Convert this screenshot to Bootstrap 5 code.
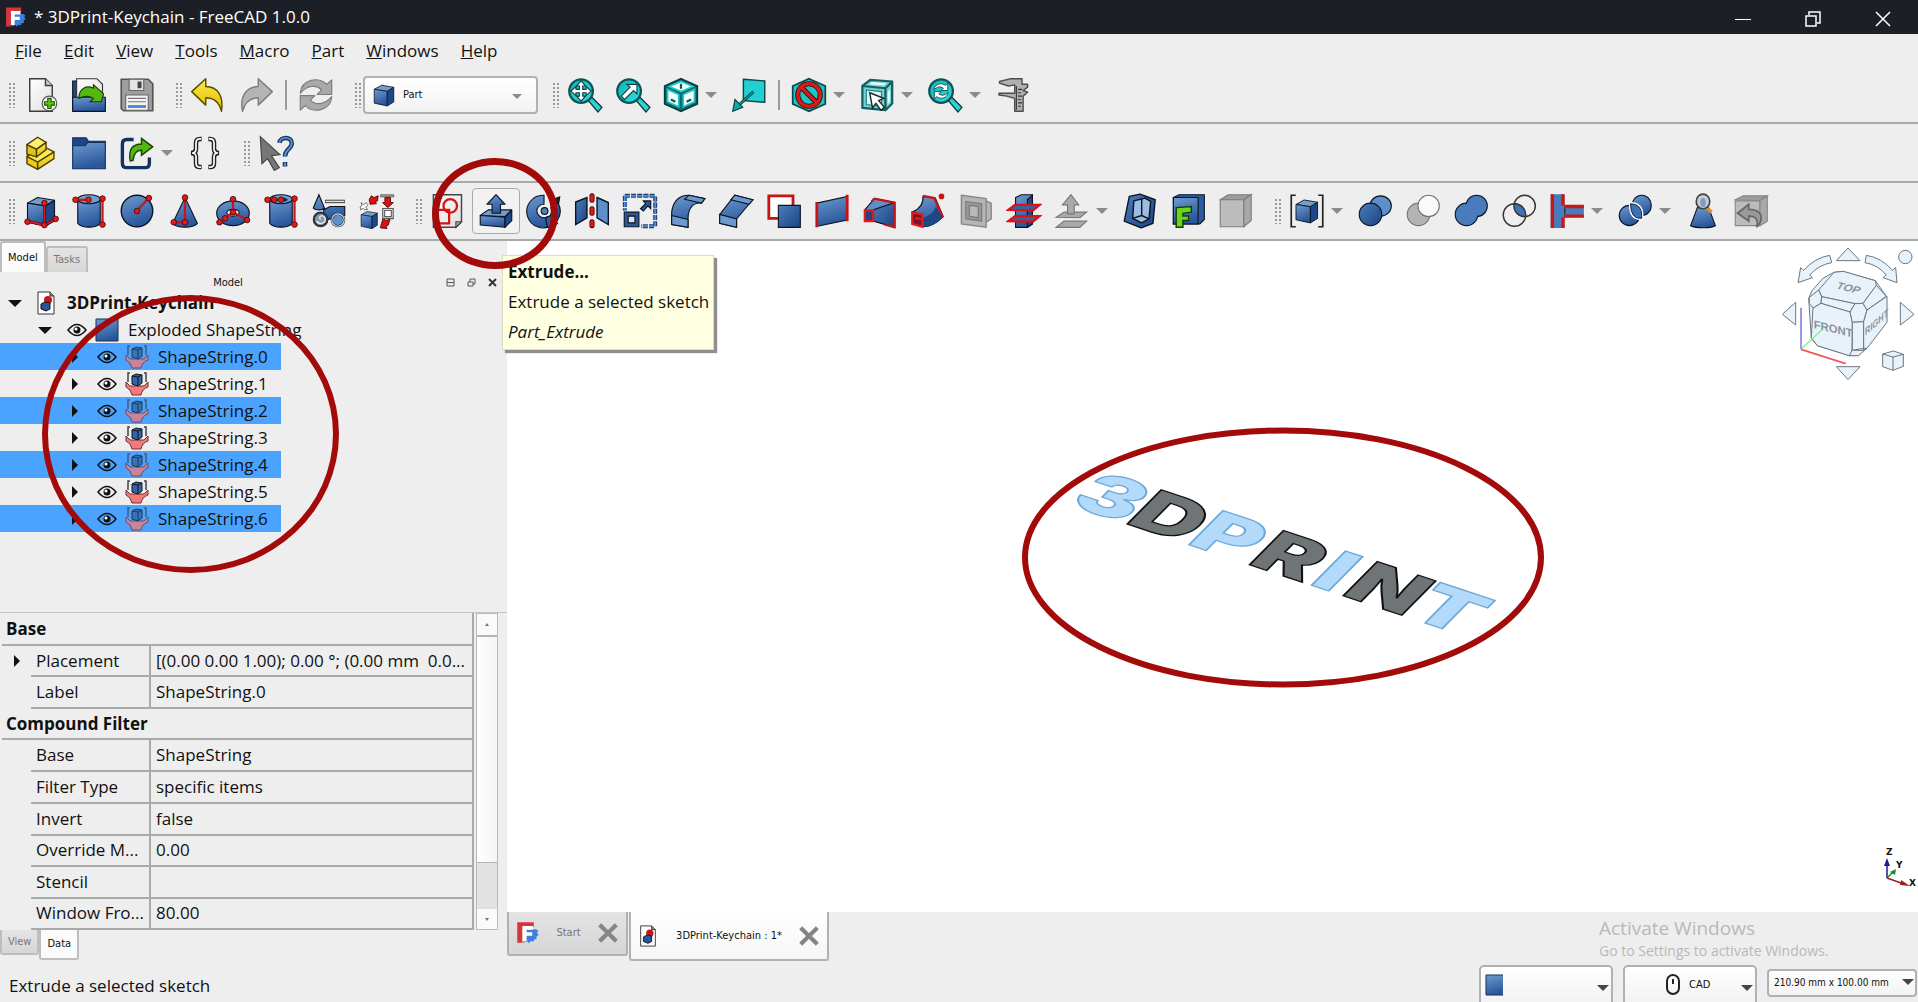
<!DOCTYPE html>
<html lang="en">
<head>
<meta charset="utf-8">
<meta name="viewport" content="width=device-width, initial-scale=1">
<title>* 3DPrint-Keychain - FreeCAD 1.0.0</title>
<link href="https://cdn.jsdelivr.net/npm/bootstrap@5.3.0/dist/css/bootstrap.min.css" rel="stylesheet">
<script src="https://cdn.jsdelivr.net/npm/bootstrap@5.3.0/dist/js/bootstrap.bundle.min.js" defer></script>
<style>
:root{--face:#eeeeee;--line:#a9abab;--mark:#a30a0a;--sel:#4aa3ff}
body{font-family:"Open Sans","Noto Sans",sans-serif;font-size:17px;line-height:24px;color:#111;background:var(--face);height:100vh;overflow:hidden}
.tiny{font-family:"DejaVu Sans Condensed","DejaVu Sans",sans-serif;font-size:11px;line-height:16px}
.titlebar{background:#1c1f25;color:#fff;height:34px;font-size:17px}
.titlebar button{width:70px;height:34px;color:#fff;border:0;border-radius:0}
.menus{height:34px}
.menus a{color:#111;text-decoration:none;padding:0 11px}
.tools{height:59px;border-bottom:2px solid var(--line)}
.tools-top{height:56px}
.tools-low{height:58px}
.tool{width:48px;height:46px;padding:0;border:1px solid transparent;border-radius:4px;display:flex;align-items:center;justify-content:center;position:relative;flex:none}
.tool svg{width:36px;height:36px}
.tool.hot{border-color:#a9a9a9;background:#f2f2f2}
.drop{width:20px;height:46px;padding:0;border:0;flex:none}
.drop::before,.caret{content:"";display:block;width:0;border:6px solid transparent;border-top-color:#8b8b8b;border-bottom:0}
.grip{width:8px;height:26px;margin:0 1px 0 14px;flex:none;background-image:radial-gradient(circle,#9a9a9a 1px,transparent 1px);background-size:4px 4px}
.grip:first-child{margin-left:8px}
.rule{width:2px;height:30px;background:#9a9a9a;margin:0 5px;flex:none}
.bench{width:175px;height:38px}
.combo{position:relative;border:2px solid #b1b1b1;border-radius:4px;background:linear-gradient(#fff,#f2f2f2);display:flex;align-items:center}
.combo select{appearance:none;background:transparent;border:0;width:100%;height:100%;outline:0;color:#111}
.combo .caret{position:absolute;right:2px;top:50%;border-top-color:#444}
.combo.bench select{padding-left:38px}
.bench svg{position:absolute;left:6px;width:26px;height:26px;pointer-events:none}
.combo.bench .caret{right:14px;top:16px;border-width:5px;border-bottom:0;border-top-color:#8b8b8b}
.ring{position:absolute;border:6px solid var(--mark);border-radius:50%;pointer-events:none;z-index:30}
.tool .ring-tool{left:-41px;top:-31px;width:126px;height:111px;border-width:7px}
.tree .ring-tree{left:42px;top:6px;width:297px;height:278px}
.side{width:507px;flex:none}
.tabbtn{border:2px solid #bdbdbd;padding:0 6px;background:linear-gradient(#e4e4e4,#d6d6d6);color:#777}
.tabbtn.on{background:#fbfbfb;color:#111}
.tabtop{border-bottom:0;border-radius:3px 3px 0 0}
.tabbot{border-top:0;border-radius:0 0 3px 3px}
.dock{height:13px}
.dock svg{width:9px;height:9px}
.dock button{width:21px;padding:0;border:0;line-height:0}
.tree{list-style:none;margin:0;padding:0;position:relative}
.tree li{height:27px;display:flex;align-items:center;white-space:nowrap}
.tree li.lv1{padding-left:8px}
.tree li.lv2{padding-left:38px}
.tree li.lv3{padding-left:68px;width:281px}
.tree li.picked{background:var(--sel)}
.picked .ti{opacity:.75}
.tree .tw{width:14px;height:14px;flex:none}
.tree .eye{width:20px;height:16px;margin:0 8px 0 15px;flex:none}
.tree .ti{width:24px;height:24px;margin-right:9px;flex:none}
.lv1 .tw{margin-right:12px}
.props{border-top:1px solid #c4c4c4;height:318px;overflow:hidden;flex:none}
.ptable{width:472px;margin-left:2px;table-layout:fixed;border-collapse:collapse;border-right:2px solid var(--line)}
.ptable tr{height:32px}
.ptable tr:nth-child(even){height:31px}
.ptable th,.ptable td{padding:0 5px;overflow:hidden;text-overflow:ellipsis;white-space:pre;border-bottom:2px solid var(--line);line-height:20px}
.ptable td:first-child{border-bottom:0;text-align:center}
.ptable td:first-child svg{display:block;margin:auto}
.ptable td+td+td{border-left:2px solid var(--line)}
.ptable th{padding-left:4px}
.sbar{width:22px;background:#e2e2e2;border:1px solid #bbb;margin-left:2px;height:317px}
.sbar button{height:21px;padding:0;border:0;border-radius:0;background:#fafafa;line-height:0;flex:none}
.sbar .thumb{height:228px;background:linear-gradient(90deg,#fff,#f4f4f4);border-top:2px solid #b5b5b5;border-bottom:1px solid #b5b5b5}
.view3d{background:#fff;position:relative;min-height:0}
.scene{display:block;width:100%;height:100%}
.navcube{position:absolute;right:0;top:0;width:148px;height:144px}
.tip{position:absolute;left:-5px;top:14px;width:212px;height:95px;padding:1px 5px;background:#ffffe1;border:1px solid #dcdcc0;box-shadow:3px 3px 1px #8f8f8f;line-height:30px;white-space:nowrap;z-index:5}
.mditabs{height:53px}
.mdi{height:44px;width:121px;border-color:#b1b1b1}
.mdi.on{height:49px;width:200px;margin-left:1px;background:linear-gradient(#fff,#f6f6f6)}
.mdi svg{width:24px;height:26px}
.mdi .closer{width:20px;height:20px}
.mdi .page{width:22px;height:24px}
.wmark{width:319px;color:#b9b9b9;padding-top:4px}
.wmark h2{font-size:19px;line-height:25px;margin:0;font-weight:400}
.wmark p{font-size:14px;line-height:20px;margin:0}
.status{height:37px;padding-left:9px}
.status .combo{height:40px;width:134px;margin-right:10px;border-radius:5px 5px 0 0}
.status .combo.size{height:28px;width:150px;margin:4px 1px 0 0;border-radius:4px;font-size:10px}
.status .size .caret{right:1px;top:8px}
.status .size select{padding:0 0 0 5px}
.status .nav{padding-left:64px}
</style>
</head>
<body class="d-flex flex-column">

<svg width="0" height="0" class="position-absolute" aria-hidden="true">
<defs>
<linearGradient id="gb" x1="0" y1="0" x2=".3" y2="1"><stop offset="0" stop-color="#6d9bd0"/><stop offset="1" stop-color="#2a569b"/></linearGradient>
<linearGradient id="gd" x1="0" y1="0" x2="1" y2="1"><stop offset="0" stop-color="#4c7dbd"/><stop offset="1" stop-color="#1b437f"/></linearGradient>
<linearGradient id="gy" x1="0" y1="0" x2="0" y2="1"><stop offset="0" stop-color="#fce94f"/><stop offset="1" stop-color="#e0bd00"/></linearGradient>
<linearGradient id="gt" x1="0" y1="0" x2="1" y2="1"><stop offset="0" stop-color="#0bb2b4"/><stop offset="1" stop-color="#34e0e2"/></linearGradient>
<linearGradient id="gp" x1="0" y1="0" x2="1" y2="1"><stop offset="0" stop-color="#fff"/><stop offset="1" stop-color="#dedede"/></linearGradient>
<g id="cube" stroke="#0b1521" stroke-width="2" stroke-linejoin="round"><path d="M8 18 26 8l30 5-16 10z" fill="#729fcf"/><path d="M8 18l32 5v36L8 52z" fill="url(#gb)"/><path d="M40 23l16-10v36L40 59z" fill="#1d4787"/></g>
<symbol id="logo" viewBox="0 0 64 64"><path d="M6 3h44v13H20v42H6z" fill="#d8343c"/><path d="M22 58V22h34l6 4-3 5 4 6-6 4 1 7-7 1-2 6-7-2-5 6-4-5z" fill="#3c7fdc"/><path d="M20 13h28v10H31v7h15v9H31v15H20z" fill="#fff"/></symbol>
<symbol id="i-new" viewBox="0 0 64 64"><path d="M12 3h28l12 12v46H12z" fill="url(#gp)" stroke="#3a3a3a" stroke-width="2.5"/><path d="M40 3v12h12" fill="#ccc" stroke="#3a3a3a" stroke-width="2.5"/><circle cx="47" cy="47" r="13" fill="#fff" stroke="#555" stroke-width="2"/><path d="M44 38h6v6h6v6h-6v6h-6v-6h-6v-6h6z" fill="#5cc614" stroke="#1f5c05" stroke-width="2"/></symbol>
<symbol id="i-open" viewBox="0 0 64 64"><path d="M3 7h12v50H3z" fill="#204a87" stroke="#0b1521" stroke-width="2"/><path d="M10 3h36l10 10v26H10z" fill="url(#gp)" stroke="#333" stroke-width="2"/><path d="M3 36h58v25H3z" fill="url(#gb)" stroke="#0b1521" stroke-width="2"/><path d="M14 38c0-18 14-24 26-18v-6l18 16-4 14H34l6-6c-10-6-18-4-26 0z" fill="#55b80f" stroke="#173f04" stroke-width="2"/></symbol>
<symbol id="i-save" viewBox="0 0 64 64"><path d="M4 4h48l8 8v48H8l-4-4z" fill="#9d9f9c" stroke="#555" stroke-width="3"/><path d="M18 4h26v20H18z" fill="#e4e4e4" stroke="#666" stroke-width="2"/><path d="M33 8h7v12h-7z" fill="#444"/><path d="M12 32h40v27H12z" fill="#f3f3f3" stroke="#666" stroke-width="2"/><path d="M16 38h32M16 44h32" stroke="#777" stroke-width="2"/><path d="M16 50h32v5H16z" fill="#4a86cf"/></symbol>
<symbol id="i-undo" viewBox="0 0 64 64"><path d="M3 26 28 3v14c22 0 32 18 28 44-4-16-12-24-28-24v13z" fill="url(#gy)" stroke="#5a4a00" stroke-width="2.5" stroke-linejoin="round"/></symbol>
<symbol id="i-redo" viewBox="0 0 64 64"><path d="M61 26 36 3v14C14 17 3 35 8 61c4-16 12-24 28-24v13z" fill="#b4b4b4" stroke="#7c7c7c" stroke-width="2.5" stroke-linejoin="round"/></symbol>
<symbol id="i-refresh" viewBox="0 0 64 64"><g fill="#a9a9a9" stroke="#7b7b7b" stroke-width="2" stroke-linejoin="round"><path id="rf" d="M4 29C6 4 38-2 51 13l9-8v26H34l8-8C32 13 16 15 4 29z"/><use href="#rf" transform="rotate(180 32 32)"/></g></symbol>
<symbol id="i-cube" viewBox="0 0 64 64"><use href="#cube"/></symbol>
<symbol id="i-fit" viewBox="0 0 64 64"><path d="M38 42l6-6 18 18-7 8z" fill="#2bd5d7" stroke="#0c4041" stroke-width="2.5"/><circle cx="25" cy="25" r="21" fill="url(#gt)" stroke="#0d5354" stroke-width="4"/><path d="M25 7l8 9h-5v6h6v-5l9 8-9 8v-5h-6v6h5l-8 9-8-9h5v-6h-6v5l-9-8 9-8v5h6v-6h-5z" fill="#fff" stroke="#103c3d" stroke-width="2"/></symbol>
<symbol id="i-fitsel" viewBox="0 0 64 64"><path d="M38 42l6-6 18 18-7 8z" fill="#2bd5d7" stroke="#0c4041" stroke-width="2.5"/><circle cx="25" cy="25" r="21" fill="url(#gt)" stroke="#0d5354" stroke-width="4"/><path d="M11 34l16-16-6-5h18v17l-6-6-16 16z" fill="#fff" stroke="#103c3d" stroke-width="2"/></symbol>
<symbol id="i-axo" viewBox="0 0 64 64"><path d="M32 3l29 13v32L32 61 3 48V16z" fill="#0d6b6d" stroke="#083c3d" stroke-width="3"/><path d="M32 8l21 9-21 9-21-9zM8 22l20 9v22L8 44zM56 22l-20 9v22l20-9z" fill="#f1ffff" stroke="#25c7c9" stroke-width="3"/><path d="M32 12v9M14 40l8 4M42 44l8-4" stroke="#0d5657" stroke-width="4"/></symbol>
<symbol id="i-ortho" viewBox="0 0 64 64"><path d="M22 4l38 3v38l-38-3z" fill="#22cfd1" stroke="#0c4546" stroke-width="2.5"/><path d="M40 26 14 50" stroke="#0c4546" stroke-width="5"/><path d="M40 26 14 50" stroke="#26d5d7" stroke-width="1.5"/><path d="M3 61l4-21 14 14z" fill="#14a5a7" stroke="#0c4546" stroke-width="2"/></symbol>
<symbol id="i-noent" viewBox="0 0 64 64"><path d="M32 3l29 13v32L32 61 3 48V16z" fill="#1bc4c6" stroke="#0c4546" stroke-width="3"/><circle cx="32" cy="32" r="20" fill="none" stroke="#3d0a0a" stroke-width="9"/><path d="M18 18l28 28" stroke="#3d0a0a" stroke-width="9"/><circle cx="32" cy="32" r="20" fill="none" stroke="#d71a1a" stroke-width="6"/><path d="M18 18l28 28" stroke="#d71a1a" stroke-width="6"/></symbol>
<symbol id="i-boxsel" viewBox="0 0 64 64"><path d="M6 16 20 5l39 3-12 12zM6 16l41 4v39L6 55zM47 20 59 8v39L47 59z" fill="#7ad0d1" stroke="#0f6061" stroke-width="4" stroke-linejoin="round"/><path d="M13 23l27 3v26l-27-3z" fill="#dff4f4" stroke="#1b8384" stroke-width="2"/><path d="M51 27l4-6v22l-4 6zM23 9l26 2-5 4-27-2z" fill="#e8f8f8"/><path d="M19 28l25 10-9 4 10 12-6 5-9-12-6 8z" fill="#fff" stroke="#1a2a2a" stroke-width="2.5"/></symbol>
<symbol id="i-link" viewBox="0 0 64 64"><path d="M38 42l6-6 18 18-7 8z" fill="#2bd5d7" stroke="#0c4041" stroke-width="2.5"/><circle cx="25" cy="25" r="21" fill="url(#gt)" stroke="#0d5354" stroke-width="4"/><g fill="#fff" stroke="#103c3d" stroke-width="1.5"><path id="lk" d="M12 23c2-12 15-13 21-8l4-4v13H25l4-4c-5-4-11-3-17 3z"/><use href="#lk" transform="rotate(180 25 25)"/></g></symbol>
<symbol id="i-caliper" viewBox="0 0 64 64"><path d="M8 8 28 3h20v10l10 0v5l-8 6 8 3-8 7v27H35V38l-14-4-14-2v-3h28V14L24 16 8 11z" fill="#b0b0b0" stroke="#4d4d4d" stroke-width="2.5" stroke-linejoin="round"/><path d="M38 16v42M41 22h7M41 28h5M41 34h7M41 40h5M41 46h7M41 52h5" stroke="#333" stroke-width="2"/></symbol>
<symbol id="i-bricks" viewBox="0 0 64 64"><g stroke="#4c3f00" stroke-width="2.5" stroke-linejoin="round"><path d="M7 38l19 10v13L7 51z" fill="#e9cc1c"/><path d="M26 48l29-18v12L26 61z" fill="url(#gy)"/><path d="M7 38l29-18 19 10-29 18z" fill="#fbe858"/><path d="M7 17l17 8v14L7 34z" fill="#e2c416"/><path d="M24 25 41 13v13L24 39z" fill="url(#gy)"/><path d="M7 17 26 4l15 9-17 12z" fill="#fdee72"/></g></symbol>
<symbol id="i-folder" viewBox="0 0 64 64"><path d="M3 5h24l4 6h30v14H3z" fill="#1d468a" stroke="#14315f" stroke-width="2"/><path d="M3 19h22l5-6h31v47H3z" fill="url(#gb)" stroke="#14315f" stroke-width="2"/></symbol>
<symbol id="i-export" viewBox="0 0 64 64"><path d="M26 8H14Q6 8 6 16v34q0 8 8 8h32q8 0 8-8V40" fill="none" stroke="#14315f" stroke-width="6"/><path d="M20 46c-4-20 4-30 20-30V6l20 15-20 15v-9c-10 0-14 6-15 18z" fill="#55b80f" stroke="#173f04" stroke-width="2.5"/></symbol>
<symbol id="i-braces" viewBox="0 0 64 64"><g fill="none" stroke="#222" stroke-width="8"><path d="M26 7h-3q-7 0-7 7v11q0 7-9 7 9 0 9 7v11q0 7 7 7h3M38 7h3q7 0 7 7v11q0 7 9 7-9 0-9 7v11q0 7-7 7h-3"/></g><g fill="none" stroke="#fff" stroke-width="3"><path d="M25 7h-2q-7 0-7 7v11q0 7-7 7 7 0 7 7v11q0 7 7 7h2M39 7h2q7 0 7 7v11q0 7 7 7-7 0-7 7v11q0 7-7 7h-2"/></g></symbol>
<symbol id="i-whats" viewBox="0 0 64 64"><path d="M4 3l35 32-15 2 14 21-9 5-12-21-10 9z" fill="#777" stroke="#444" stroke-width="2"/><path d="M38 14c2-12 22-12 22 1 0 10-12 10-12 23M48 48v8" stroke="#153463" stroke-width="8" fill="none"/><path d="M38 14c2-12 22-12 22 1 0 10-12 10-12 23M48 49v6" stroke="#5c8fd0" stroke-width="3.500" fill="none"/></symbol>
<symbol id="i-box" viewBox="0 0 64 64"><use href="#cube"/><path d="M38 20v37L8 50M38 57l20-10" stroke="#460808" stroke-width="5" fill="none"/><path d="M38 20v37L8 50M38 57l20-10" stroke="#e01b1b" stroke-width="3" fill="none"/><g fill="#e01b1b" stroke="#460808" stroke-width="1.500"><circle cx="38" cy="18" r="5"/><circle cx="38" cy="57" r="5"/><circle cx="8" cy="51" r="5"/><circle cx="58" cy="46" r="5"/></g></symbol>
<symbol id="i-cyl" viewBox="0 0 64 64"><path d="M12 12v42c8 9 32 9 40 0V12z" fill="url(#gb)" stroke="#0b1521" stroke-width="2"/><ellipse cx="32" cy="11" rx="20" ry="8" fill="#729fcf" stroke="#0b1521" stroke-width="2"/><path d="M8 12h24M56 12v42" stroke="#c81515" stroke-width="4"/><g fill="#e01b1b" stroke="#460808" stroke-width="1.500"><circle cx="8" cy="12" r="5"/><circle cx="31" cy="12" r="5"/><circle cx="56" cy="10" r="5"/><circle cx="56" cy="56" r="5"/></g></symbol>
<symbol id="i-sphere" viewBox="0 0 64 64"><circle cx="32" cy="32" r="28" fill="url(#gb)" stroke="#0b1521" stroke-width="2.500"/><path d="M32 31 53 9" stroke="#c81515" stroke-width="4"/><g fill="#e01b1b" stroke="#460808" stroke-width="1.500"><circle cx="32" cy="32" r="5"/><circle cx="53" cy="9" r="5"/></g></symbol>
<symbol id="i-cone" viewBox="0 0 64 64"><path d="M32 8 10 54c8 9 36 9 44 0z" fill="url(#gb)" stroke="#0b1521" stroke-width="2"/><path d="M32 8v44H12" stroke="#c81515" stroke-width="4" fill="none"/><g fill="#e01b1b" stroke="#460808" stroke-width="1.500"><circle cx="32" cy="8" r="5"/><circle cx="32" cy="52" r="5"/><circle cx="12" cy="52" r="5"/></g></symbol>
<symbol id="i-torus" viewBox="0 0 64 64"><ellipse cx="32" cy="36" rx="29" ry="22" fill="url(#gb)" stroke="#0b1521" stroke-width="2"/><ellipse cx="32" cy="35" rx="11" ry="6" fill="#eee" stroke="#0b1521" stroke-width="2"/><path d="M32 10v24L12 50M32 34l25 14" stroke="#c81515" stroke-width="4" fill="none"/><g fill="#e01b1b" stroke="#460808" stroke-width="1.500"><circle cx="32" cy="11" r="5"/><circle cx="32" cy="34" r="5"/><circle cx="18" cy="45" r="5"/><circle cx="8" cy="52" r="5"/><circle cx="57" cy="48" r="5"/></g></symbol>
<symbol id="i-tube" viewBox="0 0 64 64"><path d="M12 12v42c8 9 32 9 40 0V12z" fill="url(#gb)" stroke="#0b1521" stroke-width="2"/><ellipse cx="32" cy="11" rx="20" ry="8" fill="#729fcf" stroke="#0b1521" stroke-width="2"/><ellipse cx="34" cy="12" rx="10" ry="4" fill="#15335f"/><path d="M8 12h24M56 12v42" stroke="#c81515" stroke-width="4"/><g fill="#e01b1b" stroke="#460808" stroke-width="1.500"><circle cx="8" cy="12" r="5"/><circle cx="20" cy="12" r="5"/><circle cx="32" cy="12" r="5"/><circle cx="56" cy="10" r="5"/><circle cx="56" cy="56" r="5"/></g></symbol>
<symbol id="i-prims" viewBox="0 0 64 64"><path d="M14 3 4 27c4 4 16 4 20 0zM22 30l12-6h26v16l-34 8z" fill="url(#gb)" stroke="#0b1521" stroke-width="2"/><path d="M25 15h35" stroke="#222" stroke-width="6"/><path d="M26 15h33" stroke="#e5e5e5" stroke-width="3"/><g fill="#8c99a8" stroke="#2c3540" stroke-width="4"><circle cx="17" cy="47" r="12"/><circle cx="48" cy="48" r="11" fill="#5d8fcb"/></g><circle cx="48" cy="48" r="11" fill="none" stroke="#d5d9dc" stroke-width="2"/><path d="M17 47c-6-6 5-10 8-2s-10 13-15 5" stroke="#fff" stroke-width="2" fill="none"/></symbol>
<symbol id="i-build" viewBox="0 0 64 64"><use href="#cube" transform="translate(-1 28) scale(.6)"/><g fill="#d11" stroke="#400" stroke-width="1.500"><path d="M18 12l4-7 5 3 7-3-1 9-4 1 2 4-11 1zM46 8h10v9h5l-10 9-9-9h4zM40 54l3-9 4 4 8-2-3 10-4 2 2 4-12-1z"/></g><path d="M38 3h24v4H38z" fill="#999" stroke="#444"/><path d="M4 17l4 4 5-4 3 4-4 4 3 4-5 1-3-3-4 3-1-5 3-3z" fill="#fff" stroke="#555" stroke-width="1.500"/><path d="M44 29h15v15H44z" fill="#fff" stroke="#333" stroke-width="5"/><path d="M44 29h15v15H44z" fill="none" stroke="#ddd" stroke-width="2"/></symbol>
<symbol id="i-sketch" viewBox="0 0 64 64"><path d="M6 3h50v48L46 61H6z" fill="url(#gp)" stroke="#444" stroke-width="2.500"/><path d="M56 51H46v10z" fill="#aaa" stroke="#444" stroke-width="2"/><circle cx="36" cy="23" r="12" fill="none" stroke="#d11" stroke-width="4"/><path d="M6 30h28v24H6" fill="none" stroke="#d11" stroke-width="4"/></symbol>
<symbol id="i-extrude" viewBox="0 0 64 64"><g stroke="#0b1521" stroke-width="2" stroke-linejoin="round"><path d="M4 40 18 30h42L48 42z" fill="#729fcf"/><path d="M4 40l44 3v18L4 57z" fill="url(#gb)"/><path d="M48 43l12-12v18L48 61z" fill="#1d4787"/><path d="M32 3 48 20h-8v16H25V20h-9z" fill="url(#gb)"/></g></symbol>
<symbol id="i-revolve" viewBox="0 0 64 64"><g stroke="#0b1521" stroke-width="2"><path d="M32 4v16a12 12 0 1 0 6 22l10 14A29 29 0 1 1 32 4z" fill="url(#gb)"/><path d="M44 26l13-8q9 16-2 32l-12-9q4-8 1-15z" fill="url(#gd)"/><path d="M44 40 56 54q-8 8-18 7l-3-17z" fill="#2d5ba0"/><circle cx="33" cy="32" r="6" fill="#4c7dbd"/><path d="M46 12l14-5-2 12z" fill="#222"/></g></symbol>
<symbol id="i-mirror" viewBox="0 0 64 64"><path d="M3 16l20-8v36L3 56z" fill="url(#gd)" stroke="#0b1521" stroke-width="2.500"/><path d="M41 8l20 9v39L41 44z" fill="#5d8fcb" stroke="#0b1521" stroke-width="2.500"/><path d="M32 5v8M32 28v8M32 51v7" stroke="#400" stroke-width="9" stroke-linecap="round"/><path d="M32 5v8M32 28v8M32 51v7" stroke="#e01b1b" stroke-width="6" stroke-linecap="round"/></symbol>
<symbol id="i-scale" viewBox="0 0 64 64"><path d="M5 5h54v54H34M5 5v26" fill="none" stroke="#1b3f7c" stroke-width="7" stroke-dasharray="9 2"/><path d="M5 5h54v54H34M5 5v26" fill="none" stroke="#5a8ccc" stroke-width="3" stroke-dasharray="9 2"/><path d="M4 34h26v26H4z" fill="#2c579b" stroke="#0b1521" stroke-width="2"/><path d="M11 41h12v12H11z" fill="#dce7f5" stroke="#0b1521" stroke-width="2"/><path d="M33 28l9-9-4-5h13v14l-5-5-8 9z" fill="#2c579b" stroke="#0b1521" stroke-width="2"/></symbol>
<symbol id="i-fillet" viewBox="0 0 64 64"><g stroke="#0b1521" stroke-width="2"><path d="M3 56V34C5 14 18 3 34 4l28 6-6 8C42 16 32 26 32 46v15z" fill="url(#gb)"/><path d="M34 4l28 6-6 8-30-7zM3 40l29 7v14L3 56z" fill="#6c9ad0"/></g></symbol>
<symbol id="i-chamfer" viewBox="0 0 64 64"><g stroke="#0b1521" stroke-width="2"><path d="M3 54V38L30 4l32 8-7 8-22 26v15z" fill="url(#gb)"/><path d="M30 4l32 8-7 8-32-8zM3 38l30 8v15L3 54z" fill="#6c9ad0"/></g></symbol>
<symbol id="i-face" viewBox="0 0 64 64"><path d="M5 5h43v40H5z" fill="#fff" stroke="#c11" stroke-width="5"/><path d="M22 22h39v39H22z" fill="url(#gd)" stroke="#0b1521" stroke-width="2"/></symbol>
<symbol id="i-ruled" viewBox="0 0 64 64"><path d="M5 18 59 6v42L5 59z" fill="url(#gb)" stroke="#0b1521" stroke-width="2"/><path d="M5 16v45M59 3v47" stroke="#c11" stroke-width="5"/></symbol>
<symbol id="i-loft" viewBox="0 0 64 64"><path d="M5 30 22 10l36 7v44L22 50z" fill="#5d8fcb" stroke="#0b1521" stroke-width="2"/><path d="M20 30 58 17v44L20 50z" fill="url(#gd)" stroke="#0b1521" stroke-width="2"/><path d="M22 10l36 7v44L40 56M22 10l-5 5" fill="none" stroke="#c11" stroke-width="4"/><path d="M5 31h15v19H5z" fill="#26437f" stroke="#e01b1b" stroke-width="4"/></symbol>
<symbol id="i-sweep" viewBox="0 0 64 64"><path d="M4 34C18 28 24 18 23 6l22 3 14 33c-12 12-24 18-36 18z" fill="url(#gb)" stroke="#0b1521" stroke-width="2"/><path d="M22 44c10-2 20-8 24-20l13 18c-12 12-24 18-36 18z" fill="#1d4787"/><path d="M23 5l20 4 15 33" fill="none" stroke="#c11" stroke-width="4"/><path d="M4 35l18 3v22L4 55zM9 45l12 1" fill="#7c1222" stroke="#e01b1b" stroke-width="4"/><circle cx="56" cy="6" r="5" fill="#c11"/></symbol>
<symbol id="i-section" viewBox="0 0 64 64"><path d="M50 14l9 4v28l-9 6zM6 4l44 6v51L6 55z" fill="#b5b5b5" stroke="#888" stroke-width="2.500"/><path d="M14 15l28 4v31l-28-4z" fill="#999" stroke="#777" stroke-width="2"/><path d="M20 22l16 2v20l-16-3z" fill="#b9b9b9" stroke="#777" stroke-width="2"/></symbol>
<symbol id="i-cross" viewBox="0 0 64 64"><path d="M17 8 27 3h20v52l-9 6H17z" fill="url(#gb)" stroke="#0b1521" stroke-width="2"/><path d="M38 12l9-8v51l-9 6z" fill="#1d4787" stroke="#0b1521" stroke-width="2"/><g fill="#3c5fa0" stroke="#d11" stroke-width="4"><path d="M4 30l12-9h44l-12 10zM4 50l12-9h44L48 51z"/></g></symbol>
<symbol id="i-offset" viewBox="0 0 64 64"><g fill="#a9a9a9" stroke="#777" stroke-width="2"><path d="M4 43l14-9h40L46 44zM4 61l14-11h40L46 61z"/><path d="M30 3l14 18h-8v16H24V21h-9z"/></g></symbol>
<symbol id="i-thick" viewBox="0 0 64 64"><g stroke="#0b1521" stroke-width="2.500" stroke-linejoin="round"><path d="M13 6 32 2l27 10-4 42-21 8L4 50z" fill="url(#gd)"/><path d="M21 14l20-5 10 6-3 31-13 7-16-8z" fill="#9cbde2"/><path d="M35 10v30l-16 5M35 40l13 6" fill="none"/></g></symbol>
<symbol id="i-proj" viewBox="0 0 64 64"><g stroke="#0b1521" stroke-width="2"><path d="M6 8l10-5h45v44l-8 8H6z" fill="#2d5ba0"/><path d="M6 8h44v47H6z" fill="url(#gb)"/></g><path d="M11 26l27-2v10l-15 2v5h10v8H23v12H11z" fill="#6cd41b" stroke="#143d03" stroke-width="2.500"/></symbol>
<symbol id="i-graycube" viewBox="0 0 64 64"><g stroke="#7d7d7d" stroke-width="2"><path d="M4 12 18 3h41L46 12z" fill="#9d9d9d"/><path d="M4 12h42v48H4z" fill="#bcbcbc"/><path d="M46 12 59 3v46L46 60z" fill="#a8a8a8"/></g></symbol>
<symbol id="i-compound" viewBox="0 0 64 64"><path d="M12 4H4v56h8M52 4h8v56h-8" fill="none" stroke="#222" stroke-width="3"/><use href="#cube" transform="translate(6 6) scale(.8)"/></symbol>
<symbol id="i-bool" viewBox="0 0 64 64"><g stroke="#0b1521" stroke-width="2"><ellipse cx="42" cy="23" rx="19" ry="18" fill="#5d8fcb"/><ellipse cx="24" cy="38" rx="20" ry="20" fill="url(#gd)"/></g></symbol>
<symbol id="i-cut" viewBox="0 0 64 64"><g stroke="#777" stroke-width="2"><ellipse cx="24" cy="38" rx="20" ry="20" fill="#b3b3b3"/><ellipse cx="42" cy="23" rx="19" ry="19" fill="#fafafa"/></g></symbol>
<symbol id="i-union" viewBox="0 0 64 64"><g stroke="#0b1521" stroke-width="4"><ellipse cx="42" cy="23" rx="18" ry="18"/><ellipse cx="24" cy="38" rx="19" ry="19"/></g><g fill="#4a7cbd"><ellipse cx="42" cy="23" rx="18" ry="18"/><ellipse cx="24" cy="38" rx="19" ry="19"/></g></symbol>
<symbol id="i-common" viewBox="0 0 64 64"><path d="M24 18A19 19 0 0 1 43 42 19 19 0 0 1 24 18z" fill="#3f72b8"/><g fill="none" stroke="#333" stroke-width="2.500"><ellipse cx="42" cy="23" rx="19" ry="19"/><ellipse cx="24" cy="39" rx="20" ry="20"/></g></symbol>
<symbol id="i-join" viewBox="0 0 64 64"><path d="M3 2h24v20h35v21H27v19H3z" fill="#4a7cbd"/><path d="M6 2v60M25 2v20M25 43v19M27 24h35M27 41h35" stroke="#c91818" stroke-width="6"/><path d="M28 27v11" stroke="#222" stroke-width="2"/></symbol>
<symbol id="i-split" viewBox="0 0 64 64"><g stroke="#0b1521" stroke-width="2" fill="url(#gb)"><ellipse cx="44" cy="22" rx="17" ry="18"/><ellipse cx="22" cy="40" rx="18" ry="18"/></g><path d="M24 19q22 0 20 26-20 2-20-26z" fill="#3e70b4" stroke="#fff" stroke-width="6"/><path d="M24 19q22 0 20 26-20 2-20-26z" fill="#3e70b4" stroke="#0b1521" stroke-width="1.500"/></symbol>
<symbol id="i-check" viewBox="0 0 64 64"><path d="M22 26h20l12 32c-10 5-34 5-44 0z" fill="url(#gb)" stroke="#0b1521" stroke-width="2"/><path d="M38 26l9 8" stroke="#e08a1e" stroke-width="6"/><ellipse cx="32" cy="15" rx="12" ry="13" fill="#c7ced4" stroke="#444" stroke-width="3"/><ellipse cx="32" cy="17" rx="5" ry="8" fill="#7d9cc4"/></symbol>
<symbol id="i-defeat" viewBox="0 0 64 64"><g stroke="#888" stroke-width="2"><path d="M4 12 18 5h43L46 14z" fill="#9d9d9d"/><path d="M4 14h44v44H4z" fill="#bcbcbc"/><path d="M48 14 61 6v44L48 58z" fill="#a8a8a8"/></g><path d="M8 36l20-16v9c24 0 28 16 14 32 4-14-2-20-14-20v9z" fill="#999" stroke="#666" stroke-width="3"/></symbol>
<symbol id="t-doc" viewBox="0 0 24 24"><path d="M4 1h12l4 4v18H4z" fill="#fff" stroke="#333"/><path d="M16 1v4h4" fill="#888" stroke="#333"/><circle cx="14" cy="9" r="4" fill="#c81515"/><path d="M7 13l4-2 5 1v6l-4 2-5-2z" fill="#29569b" stroke="#0b1521"/></symbol>
<symbol id="t-eye" viewBox="0 0 20 16"><path d="M1 8q9-11 18 0-9 11-18 0z" fill="none" stroke="#111" stroke-width="1.500"/><circle cx="10" cy="8" r="3.500" fill="#111"/><circle cx="9" cy="7" r="1.500" fill="#fff"/></symbol>
<symbol id="t-shape" viewBox="0 0 24 24"><path d="M5 1H3v9M19 1h2v9" fill="none" stroke="#444" stroke-width="1.500"/><path d="M1 10v5q5 2 6 8h9q1-6 7-8v-5l-4 4H5z" fill="#f47a7a" stroke="#6e3030"/><path d="M7 4l4-2 6 1v8l-4 3-6-2z" fill="#3465a4" stroke="#0b1521"/><path d="M7 4l6 1 4-2M13 5v8" stroke="#0b1521" fill="none"/></symbol>
<symbol id="t-right" viewBox="0 0 14 14"><path d="M4 1l6 6-6 6z" fill="#111"/></symbol>
<symbol id="t-down" viewBox="0 0 14 14"><path d="M0 4h14L7 11z" fill="#111"/></symbol>
<symbol id="t-x" viewBox="0 0 24 24"><path d="M2 2l20 20M22 2 2 22" stroke="#858585" stroke-width="5"/></symbol>
</defs>
</svg>

<header class="titlebar d-flex align-items-center flex-shrink-0">
  <svg class="ms-1 me-2" width="22" height="25"><use href="#logo"/></svg>
  <span class="me-auto">* 3DPrint-Keychain - FreeCAD 1.0.0</span>
  <button class="btn p-0" aria-label="Minimize"><svg width="16" height="16"><path d="M0 8.500h16" stroke="#fff"/></svg></button>
  <button class="btn p-0" aria-label="Restore"><svg width="16" height="16" fill="none" stroke="#fff" stroke-width="1.500"><path d="M1 5h10v10H1zM4 4V1h11v11h-3"/></svg></button>
  <button class="btn p-0" aria-label="Close"><svg width="16" height="16"><path d="M1 1l14 14M15 1 1 15" stroke="#fff" stroke-width="1.500"/></svg></button>
</header>

<nav class="menus d-flex align-items-center ps-1 flex-shrink-0">
  <a href="#"><u>F</u>ile</a><a href="#"><u>E</u>dit</a><a href="#"><u>V</u>iew</a><a href="#"><u>T</u>ools</a><a href="#"><u>M</u>acro</a><a href="#"><u>P</u>art</a><a href="#"><u>W</u>indows</a><a href="#"><u>H</u>elp</a>
</nav>

<div class="tools tools-top d-flex align-items-center flex-shrink-0" role="toolbar" aria-label="File and view">
  <span class="grip"></span>
  <button class="btn tool" aria-label="New"><svg><use href="#i-new"/></svg></button>
  <button class="btn tool" aria-label="Open"><svg><use href="#i-open"/></svg></button>
  <button class="btn tool" aria-label="Save"><svg><use href="#i-save"/></svg></button>
  <span class="grip"></span>
  <button class="btn tool" aria-label="Undo"><svg><use href="#i-undo"/></svg></button>
  <button class="btn tool" aria-label="Redo"><svg><use href="#i-redo"/></svg></button>
  <span class="rule"></span>
  <button class="btn tool" aria-label="Refresh"><svg><use href="#i-refresh"/></svg></button>
  <span class="grip"></span>
  <div class="combo bench tiny"><svg><use href="#i-cube"/></svg><select aria-label="Workbench"><option>Part</option></select><span class="caret"></span></div>
  <span class="grip"></span>
  <button class="btn tool" aria-label="Fit all"><svg><use href="#i-fit"/></svg></button>
  <button class="btn tool" aria-label="Fit selection"><svg><use href="#i-fitsel"/></svg></button>
  <button class="btn tool" aria-label="Axonometric"><svg><use href="#i-axo"/></svg></button><button class="btn drop" aria-label="More views"></button>
  <button class="btn tool" aria-label="Align to selection"><svg><use href="#i-ortho"/></svg></button>
  <span class="rule"></span>
  <button class="btn tool" aria-label="Draw style"><svg><use href="#i-noent"/></svg></button><button class="btn drop" aria-label="More styles"></button>
  <button class="btn tool" aria-label="Box selection"><svg><use href="#i-boxsel"/></svg></button><button class="btn drop" aria-label="More selections"></button>
  <button class="btn tool" aria-label="Sync view"><svg><use href="#i-link"/></svg></button><button class="btn drop" aria-label="More sync"></button>
  <button class="btn tool" aria-label="Measure"><svg><use href="#i-caliper"/></svg></button>
</div>

<div class="tools d-flex align-items-center flex-shrink-0" role="toolbar" aria-label="Structure">
  <span class="grip"></span>
  <button class="btn tool" aria-label="Create part"><svg><use href="#i-bricks"/></svg></button>
  <button class="btn tool" aria-label="Create group"><svg><use href="#i-folder"/></svg></button>
  <button class="btn tool" aria-label="Make link"><svg><use href="#i-export"/></svg></button><button class="btn drop" aria-label="More links"></button>
  <button class="btn tool" aria-label="Variable set"><svg><use href="#i-braces"/></svg></button>
  <span class="grip"></span>
  <button class="btn tool" aria-label="What's this?"><svg><use href="#i-whats"/></svg></button>
</div>

<div class="tools tools-low d-flex align-items-center flex-shrink-0" role="toolbar" aria-label="Part">
  <span class="grip"></span>
  <button class="btn tool" aria-label="Box"><svg><use href="#i-box"/></svg></button>
  <button class="btn tool" aria-label="Cylinder"><svg><use href="#i-cyl"/></svg></button>
  <button class="btn tool" aria-label="Sphere"><svg><use href="#i-sphere"/></svg></button>
  <button class="btn tool" aria-label="Cone"><svg><use href="#i-cone"/></svg></button>
  <button class="btn tool" aria-label="Torus"><svg><use href="#i-torus"/></svg></button>
  <button class="btn tool" aria-label="Tube"><svg><use href="#i-tube"/></svg></button>
  <button class="btn tool" aria-label="Primitives"><svg><use href="#i-prims"/></svg></button>
  <button class="btn tool" aria-label="Shape builder"><svg><use href="#i-build"/></svg></button>
  <span class="grip"></span>
  <button class="btn tool" aria-label="Sketch"><svg><use href="#i-sketch"/></svg></button>
  <button class="btn tool hot" aria-label="Extrude"><svg><use href="#i-extrude"/></svg><span class="ring ring-tool"></span></button>
  <button class="btn tool" aria-label="Revolve"><svg><use href="#i-revolve"/></svg></button>
  <button class="btn tool" aria-label="Mirror"><svg><use href="#i-mirror"/></svg></button>
  <button class="btn tool" aria-label="Scale"><svg><use href="#i-scale"/></svg></button>
  <button class="btn tool" aria-label="Fillet"><svg><use href="#i-fillet"/></svg></button>
  <button class="btn tool" aria-label="Chamfer"><svg><use href="#i-chamfer"/></svg></button>
  <button class="btn tool" aria-label="Make face"><svg><use href="#i-face"/></svg></button>
  <button class="btn tool" aria-label="Ruled surface"><svg><use href="#i-ruled"/></svg></button>
  <button class="btn tool" aria-label="Loft"><svg><use href="#i-loft"/></svg></button>
  <button class="btn tool" aria-label="Sweep"><svg><use href="#i-sweep"/></svg></button>
  <button class="btn tool" aria-label="Section"><svg><use href="#i-section"/></svg></button>
  <button class="btn tool" aria-label="Cross-sections"><svg><use href="#i-cross"/></svg></button>
  <button class="btn tool" aria-label="Offset"><svg><use href="#i-offset"/></svg></button><button class="btn drop" aria-label="More offsets"></button>
  <button class="btn tool" aria-label="Thickness"><svg><use href="#i-thick"/></svg></button>
  <button class="btn tool" aria-label="Projection"><svg><use href="#i-proj"/></svg></button>
  <button class="btn tool" aria-label="Color per face"><svg><use href="#i-graycube"/></svg></button>
  <span class="grip"></span>
  <button class="btn tool" aria-label="Compound"><svg><use href="#i-compound"/></svg></button><button class="btn drop" aria-label="More compounds"></button>
  <button class="btn tool" aria-label="Boolean"><svg><use href="#i-bool"/></svg></button>
  <button class="btn tool" aria-label="Cut"><svg><use href="#i-cut"/></svg></button>
  <button class="btn tool" aria-label="Union"><svg><use href="#i-union"/></svg></button>
  <button class="btn tool" aria-label="Intersection"><svg><use href="#i-common"/></svg></button>
  <button class="btn tool" aria-label="Connect"><svg><use href="#i-join"/></svg></button><button class="btn drop" aria-label="More joins"></button>
  <button class="btn tool" aria-label="Split"><svg><use href="#i-split"/></svg></button><button class="btn drop" aria-label="More splits"></button>
  <button class="btn tool" aria-label="Check geometry"><svg><use href="#i-check"/></svg></button>
  <button class="btn tool" aria-label="Defeaturing"><svg><use href="#i-defeat"/></svg></button>
</div>

<main class="d-flex flex-grow-1" style="min-height:0">
  <aside class="side d-flex flex-column">
    <div class="d-flex align-items-end tiny" role="tablist" style="height:31px">
      <button class="tabbtn tabtop on h-100" role="tab">Model</button>
      <button class="tabbtn tabtop" role="tab" style="height:26px">Tasks</button>
    </div>
    <div class="dock tiny d-flex align-items-center mt-1 pe-1 ps-3">
      <span class="flex-grow-1 text-center">Model</span>
      <button class="btn" aria-label="Shade"><svg viewBox="0 0 9 9" fill="none" stroke="#555"><path d="M1 1h7v7H1zM1 4.500h7"/></svg></button>
      <button class="btn" aria-label="Float"><svg viewBox="0 0 9 9" fill="none" stroke="#555"><path d="M1 4h5v4H1zM3 4V1h5v5H6"/></svg></button>
      <button class="btn" aria-label="Close panel"><svg viewBox="0 0 9 9" stroke="#333" stroke-width="2"><path d="M1 1l7 7M8 1 1 8"/></svg></button>
    </div>
    <ul class="tree">
      <li class="lv1 fw-bold"><svg class="tw"><use href="#t-down"/></svg><svg class="ti"><use href="#t-doc"/></svg>3DPrint-Keychain</li>
      <li class="lv2"><svg class="tw"><use href="#t-down"/></svg><svg class="eye"><use href="#t-eye"/></svg><svg class="ti" viewBox="0 0 24 24"><path d="M1 1h22v22H1z" fill="url(#gb)" stroke="#14315f"/></svg>Exploded ShapeString</li>
      <li class="lv3 picked"><svg class="tw"><use href="#t-right"/></svg><svg class="eye"><use href="#t-eye"/></svg><svg class="ti"><use href="#t-shape"/></svg>ShapeString.0</li>
      <li class="lv3"><svg class="tw"><use href="#t-right"/></svg><svg class="eye"><use href="#t-eye"/></svg><svg class="ti"><use href="#t-shape"/></svg>ShapeString.1</li>
      <li class="lv3 picked"><svg class="tw"><use href="#t-right"/></svg><svg class="eye"><use href="#t-eye"/></svg><svg class="ti"><use href="#t-shape"/></svg>ShapeString.2</li>
      <li class="lv3"><svg class="tw"><use href="#t-right"/></svg><svg class="eye"><use href="#t-eye"/></svg><svg class="ti"><use href="#t-shape"/></svg>ShapeString.3</li>
      <li class="lv3 picked"><svg class="tw"><use href="#t-right"/></svg><svg class="eye"><use href="#t-eye"/></svg><svg class="ti"><use href="#t-shape"/></svg>ShapeString.4</li>
      <li class="lv3"><svg class="tw"><use href="#t-right"/></svg><svg class="eye"><use href="#t-eye"/></svg><svg class="ti"><use href="#t-shape"/></svg>ShapeString.5</li>
      <li class="lv3 picked"><svg class="tw"><use href="#t-right"/></svg><svg class="eye"><use href="#t-eye"/></svg><svg class="ti"><use href="#t-shape"/></svg>ShapeString.6</li>
      <li class="ring ring-tree" aria-hidden="true"></li>
    </ul>
    <div class="props d-flex mt-auto">
      <table class="ptable">
        <colgroup><col style="width:29px"><col style="width:119px"><col></colgroup>
        <tbody>
        <tr><th colspan="3">Base</th></tr>
        <tr><td class="p-0"><svg width="14" height="14"><use href="#t-right"/></svg></td><td>Placement</td><td>[(0.00 0.00 1.00); 0.00 °; (0.00 mm  0.0...</td></tr>
        <tr><td></td><td>Label</td><td>ShapeString.0</td></tr>
        <tr><th colspan="3">Compound Filter</th></tr>
        <tr><td></td><td>Base</td><td>ShapeString</td></tr>
        <tr><td></td><td>Filter Type</td><td>specific items</td></tr>
        <tr><td></td><td>Invert</td><td>false</td></tr>
        <tr><td></td><td>Override M...</td><td>0.00</td></tr>
        <tr><td></td><td>Stencil</td><td></td></tr>
        <tr><td></td><td>Window Fro...</td><td>80.00</td></tr>
        </tbody>
      </table>
      <div class="sbar d-flex flex-column">
        <button class="btn" aria-label="Scroll up"><svg width="4" height="3"><path d="M0 3l2-3 2 3z" fill="#777"/></svg></button>
        <div class="thumb"></div>
        <button class="btn mt-auto border-top" aria-label="Scroll down"><svg width="4" height="3"><path d="M0 0l2 3 2-3z" fill="#777"/></svg></button>
      </div>
    </div>
    <div class="d-flex align-items-start tiny flex-shrink-0" role="tablist" style="height:35px">
      <button class="tabbtn tabbot" role="tab" style="height:25px">View</button>
      <button class="tabbtn tabbot on" role="tab" style="height:30px">Data</button>
    </div>
  </aside>

  <section class="d-flex flex-column flex-grow-1" style="min-width:0">
    <div class="view3d flex-grow-1">
      <svg class="scene" viewBox="0 0 1411 671" preserveAspectRatio="xMidYMid meet">
        <g transform="matrix(1.44 .478 -.78 .787 620.5 283.3)" font-family="Inter" font-weight="900" font-size="60" stroke-width="1.300">
          <g fill="#b3dafa" stroke="#6fa9d8"><text x="-42">3</text><text x="40">P</text><text x="125">I</text><text x="192">T</text></g>
          <g fill="#6f7476" stroke="#111"><text x="-3">D</text><text x="82">R</text><text x="147">N</text></g>
        </g>
        <ellipse cx="776" cy="316.500" rx="258" ry="127" fill="none" stroke="#a30a0a" stroke-width="6"/>
        <g stroke-width="1.500"><path d="M1380 637v-15" stroke="#1b1b9a"/><path d="M1377 625l3-8 3 8z" fill="#1b1b9a"/><path d="M1380 637l6-6" stroke="#1c8a2c"/><path d="M1383 631l6-3-1 6z" fill="#1c8a2c"/><path d="M1380 637l14 5" stroke="#9b2020"/><path d="M1394 639l9 6-10-1z" fill="#9b2020"/></g>
        <g font-family="DejaVu Sans" font-weight="700" font-size="9" fill="#111"><text x="1379" y="614">Z</text><text x="1389" y="627">Y</text><text x="1402" y="645">X</text></g>
      </svg>
      <svg class="navcube" viewBox="0 18 444 432" fill="#e8f2fb" stroke="#6d7780" stroke-width="3" stroke-linejoin="round" aria-label="Navigation cube">
        <path d="M199 77 234 39l36 38zM199 395h71l-36 39zM77 202v68l-40-32zM391 202v68l41-32z"/>
        <path d="M84 143l8-45 9 8q34-38 78-45l6 22q-38 6-66 37l8 8zM381 143l-4-45-10 8q-32-38-78-45l-4 22q38 6 64 37l-10 8z"/>
        <circle cx="406" cy="66" r="20"/>
        <path d="M218 109 316 137 349 184V262L265 362H238L142 332 124 310 116 190 126 167 160 129 192 112z"/>
        <g><path d="M192 112l28-3 96 28 3 14-40 54-24 1L155 185l-9-20z"/><path d="M146 165l9 20-2 20-24 14-11-14v-18z"/><path d="M155 185l100 21-15 25-87-26z"/><path d="M129 219l24-14 87 26 7 29-1 91-8 11-96-30-18-24z"/><path d="M240 231l15-25 24-1 12 20-10 35-34 2z"/><path d="M247 262l34-2v80l-34 6z"/><path d="M279 205l40-54 30 33-58 41z"/><path d="M291 225l60-41v78l-60 78h-10v-80z"/><path d="M246 346h35l10-6-26 22h-27z"/></g>
        <g stroke="#333" stroke-width="2"><path d="M338 357l33-9 29 10v36l-31 12-31-11z"/><path d="M338 357l31 9 31-8M369 366v40"/></g>
        <g fill="none" stroke-width="4"><path d="M93 218v125" stroke="#6a62dc"/><path d="M93 343l62-58" stroke="#7ff08b"/><path d="M93 343l134 43" stroke="#ef5a5a" stroke-width="5"/></g>
        <g fill="#8b939a" stroke="none" font-family="Liberation Sans" font-weight="700"><text transform="matrix(1 .24 -.5 .8 196 160)" font-size="34">TOP</text><text transform="matrix(1 .24 0 1 131 279)" font-size="34">FRONT</text><text transform="matrix(.7 -.62 0 1 285 303)" font-size="32">RIGHT</text></g>
      </svg>
      <div class="tip" role="tooltip"><b>Extrude...</b><br>Extrude a selected sketch<br><i>Part_Extrude</i></div>
    </div>
    <div class="mditabs d-flex align-items-start flex-shrink-0">
      <button class="tabbtn tabbot mdi tiny d-flex align-items-center justify-content-between pe-2"><svg><use href="#logo"/></svg><span>Start</span><svg class="closer"><use href="#t-x"/></svg></button>
      <button class="tabbtn tabbot mdi on tiny d-flex align-items-center justify-content-between pe-2"><svg class="page"><use href="#t-doc"/></svg><span>3DPrint-Keychain : 1*</span><svg class="closer"><use href="#t-x"/></svg></button>
      <div class="wmark ms-auto"><h2>Activate Windows</h2><p>Go to Settings to activate Windows.</p></div>
    </div>
  </section>
</main>

<footer class="status d-flex flex-shrink-0">
  <span class="me-auto align-self-center pt-1">Extrude a selected sketch</span>
  <div class="combo"><svg class="ms-1" width="22" height="22"><path d="M1 1h20v20H1z" fill="url(#gb)" stroke="#14315f"/></svg><select aria-label="Report view"><option></option></select><span class="caret"></span></div>
  <div class="combo tiny"><select class="nav" aria-label="Navigation style"><option>CAD</option></select><svg class="position-absolute" style="left:40px" width="16" height="22" fill="none" stroke="#222" stroke-width="2"><rect x="2" y="1" width="12" height="19" rx="6"/><path d="M8 5v5"/></svg><span class="caret"></span></div>
  <div class="combo size tiny"><select aria-label="Dimensions"><option>210.90 mm x 100.00 mm</option></select><span class="caret"></span></div>
</footer>
</body>
</html>
